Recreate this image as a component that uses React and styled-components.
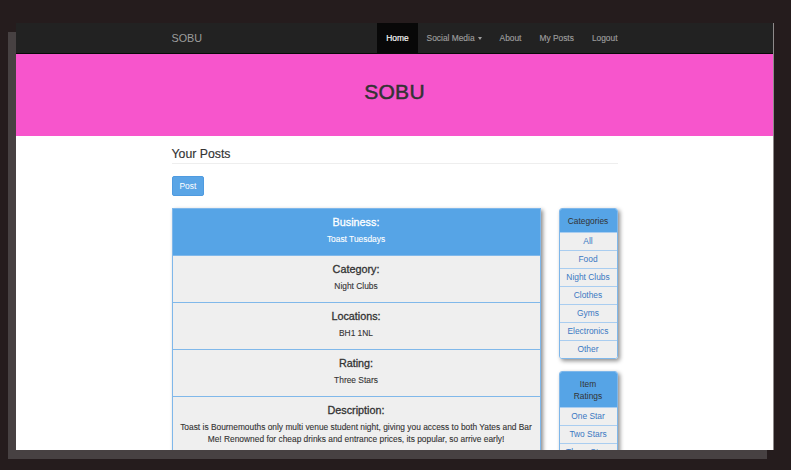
import React from 'react'
import styled, { createGlobalStyle } from 'styled-components'

const GlobalStyle = createGlobalStyle`
    * {
        box-sizing: border-box;
    }

    body {
        margin: 0;
        background: #251c1d;
        font-family: "Liberation Sans", Arial, sans-serif;
        color: #333;
    }
`

const categories = ['All', 'Food', 'Night Clubs', 'Clothes', 'Gyms', 'Electronics', 'Other']
const ratings = ['One Star', 'Two Stars', 'Three Stars', 'Four Stars', 'Five Stars']

const post = [
    { label: 'Business:', value: 'Toast Tuesdays' },
    { label: 'Category:', value: 'Night Clubs' },
    { label: 'Locations:', value: 'BH1 1NL' },
    { label: 'Rating:', value: 'Three Stars' },
    {
        label: 'Description:',
        value: 'Toast is Bournemouths only multi venue student night, giving you access to both Yates and Bar Me! Renowned for cheap drinks and entrance prices, its popular, so arrive early!'
    }
]

function App() {
    return (
        <>
            <GlobalStyle />
            <Desktop>
                <BackWindow />
                <Window>
                    <Navbar>
                        <Container className="nav-center">
                            <Brand>SOBU</Brand>
                            <NavList>
                                <NavItem $active>Home</NavItem>
                                <NavItem>Social Media <Caret /></NavItem>
                                <NavItem>About</NavItem>
                                <NavItem>My Posts</NavItem>
                                <NavItem>Logout</NavItem>
                            </NavList>
                        </Container>
                    </Navbar>

                    <Jumbotron>
                        <h1>SOBU</h1>
                    </Jumbotron>

                    <Container>
                        <PageHeader>Your Posts</PageHeader>
                        <PostButton>Post</PostButton>

                        <Row>
                            <PostCard>
                                {post.map((item, i) => (
                                    <Section key={item.label} $head={i === 0}>
                                        <h4>{item.label}</h4>
                                        <p>{item.value}</p>
                                    </Section>
                                ))}
                            </PostCard>

                            <Sidebar>
                                <Panel>
                                    <PanelHead>Categories</PanelHead>
                                    {categories.map(c => <PanelItem key={c}>{c}</PanelItem>)}
                                </Panel>
                                <Panel>
                                    <PanelHead>Item<br />Ratings</PanelHead>
                                    {ratings.map(r => <PanelItem key={r}>{r}</PanelItem>)}
                                </Panel>
                            </Sidebar>
                        </Row>
                    </Container>
                </Window>
            </Desktop>
        </>
    )
}

const Desktop = styled.div`
    position: relative;
    width: 791px;
    height: 470px;
    overflow: hidden;
`

const BackWindow = styled.div`
    position: absolute;
    left: 8px;
    top: 32px;
    width: 759px;
    height: 427px;
    background: #474142;
`

const Window = styled.div`
    position: absolute;
    left: 16px;
    top: 23px;
    width: 758px;
    height: 427px;
    background: #fff;
    border-right: 1px solid #8e8a8a;
    overflow: hidden;
`

const Container = styled.div`
    width: 464px;
    margin: 0 auto;
    padding: 0 9px;

    &.nav-center {
        display: flex;
        align-items: center;
        justify-content: space-between;
        height: 100%;
    }
`

const Navbar = styled.nav`
    height: 31px;
    background: #222;
    border-bottom: 1px solid #080808;
`

const Brand = styled.a`
    font-size: 10.8px;
    color: #9d9d9d;
`

const NavList = styled.ul`
    display: flex;
    margin: 0 -9px 0 0;
    padding: 0;
    list-style: none;
    height: 30px;
`

const NavItem = styled.li`
    display: flex;
    align-items: center;
    padding: 0 9px;
    font-size: 8.4px;
    -webkit-text-stroke: 0.15px currentColor;
    color: ${p => (p.$active ? '#fff' : '#9d9d9d')};
    background: ${p => (p.$active ? '#080808' : 'transparent')};
`

const Caret = styled.span`
    display: inline-block;
    margin-left: 3px;
    border-top: 3px solid #9d9d9d;
    border-left: 2.5px solid transparent;
    border-right: 2.5px solid transparent;
`

const Jumbotron = styled.header`
    height: 82px;
    padding-top: 26px;
    background: #f755cc;
    text-align: center;

    h1 {
        margin: 0;
        font-size: 21px;
        line-height: 24px;
        font-weight: 500;
        letter-spacing: 0.3px;
        color: #333;
        -webkit-text-stroke: 0.5px #333;
    }
`

const PageHeader = styled.h3`
    margin: 11px 0 0;
    padding-bottom: 1.5px;
    font-size: 12.3px;
    line-height: 14px;
    font-weight: 500;
    -webkit-text-stroke: 0.15px #333;
    border-bottom: 1px solid #eee;
`

const PostButton = styled.button`
    display: block;
    margin-top: 12px;
    height: 20px;
    padding: 0 7px;
    font-family: inherit;
    font-size: 8.4px;
    line-height: 18px;
    color: #fff;
    background: #5aa5e6;
    border: 1px solid #4f9be0;
    border-radius: 2px;
`

const Row = styled.div`
    display: flex;
    align-items: flex-start;
    gap: 18px;
    margin-top: 12px;
`

const PostCard = styled.div`
    width: 369px;
    border: 1px solid #7fb7ea;
    box-shadow: 2px 2px 4px rgba(0, 0, 0, 0.45);
`

const Section = styled.div`
    padding: 6px 4px 10px;
    text-align: center;
    background: ${p => (p.$head ? '#56a4e6' : '#efefef')};
    color: ${p => (p.$head ? '#fff' : '#333')};
    border-top: ${p => (p.$head ? 'none' : '1px solid #80b8ea')};

    h4 {
        margin: 0;
        font-size: 10.8px;
        line-height: 14px;
        font-weight: 500;
        -webkit-text-stroke: 0.3px currentColor;
    }

    p {
        margin: 4px 0 0;
        font-size: 8.4px;
        line-height: 12px;
        -webkit-text-stroke: 0.1px currentColor;
    }
`

const Sidebar = styled.aside`
    display: flex;
    flex-direction: column;
    gap: 12px;
    width: 59px;
`

const Panel = styled.div`
    border: 1px solid #7fb7ea;
    border-radius: 3px;
    overflow: hidden;
    box-shadow: 2px 2px 4px rgba(0, 0, 0, 0.45);
`

const PanelHead = styled.div`
    padding: 6px 2px 5px;
    font-size: 8.4px;
    line-height: 12px;
    text-align: center;
    color: #333;
    background: #56a4e6;
`

const PanelItem = styled.div`
    height: 18px;
    line-height: 17px;
    font-size: 8.4px;
    text-align: center;
    color: #3a78c2;
    background: #efefef;
    border-top: 1px solid #a9cdf0;
    white-space: nowrap;
`

export default App
